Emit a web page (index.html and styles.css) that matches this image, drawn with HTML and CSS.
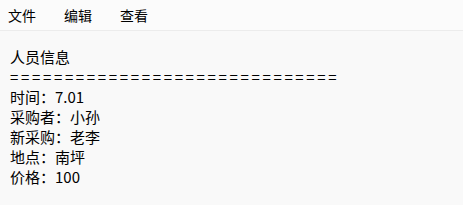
FILE: index.html
```html
<!DOCTYPE html>
<html lang="zh-CN">
  <head>
    <meta charset="UTF-8" />
    <title>人员信息</title>
    <link rel="stylesheet" href="styles.css">
  </head>
  <body>
    <div class="menubar">
      <span class="menu-item">文件</span>
      <span class="menu-item">编辑</span>
      <span class="menu-item">查看</span>
    </div>
    <div class="content">
      <div class="line">人员信息</div>
      <div class="line divider">==============================</div>
      <div class="line">时间：7.01</div>
      <div class="line">采购者：小孙</div>
      <div class="line">新采购：老李</div>
      <div class="line">地点：南坪</div>
      <div class="line">价格：100</div>
    </div>
  </body>
</html>
```

FILE: styles.css
```css
body {
  margin: 0;
  background-color: #f9f9f9;
  font-family: "Noto Sans CJK SC", "Noto Sans", sans-serif;
  color: #000;
}
.menubar {
  height: 30px;
  background-color: #fbfbfb;
  border-bottom: 1px solid #ececec;
  display: flex;
  align-items: center;
  padding-left: 8px;
  gap: 28px;
  font-size: 14px;
}
.content {
  padding: 16px 10px;
  font-size: 15px;
}
.line {
  line-height: 20px;
  white-space: pre;
}
.divider {
  letter-spacing: 2.65px;
}
```
